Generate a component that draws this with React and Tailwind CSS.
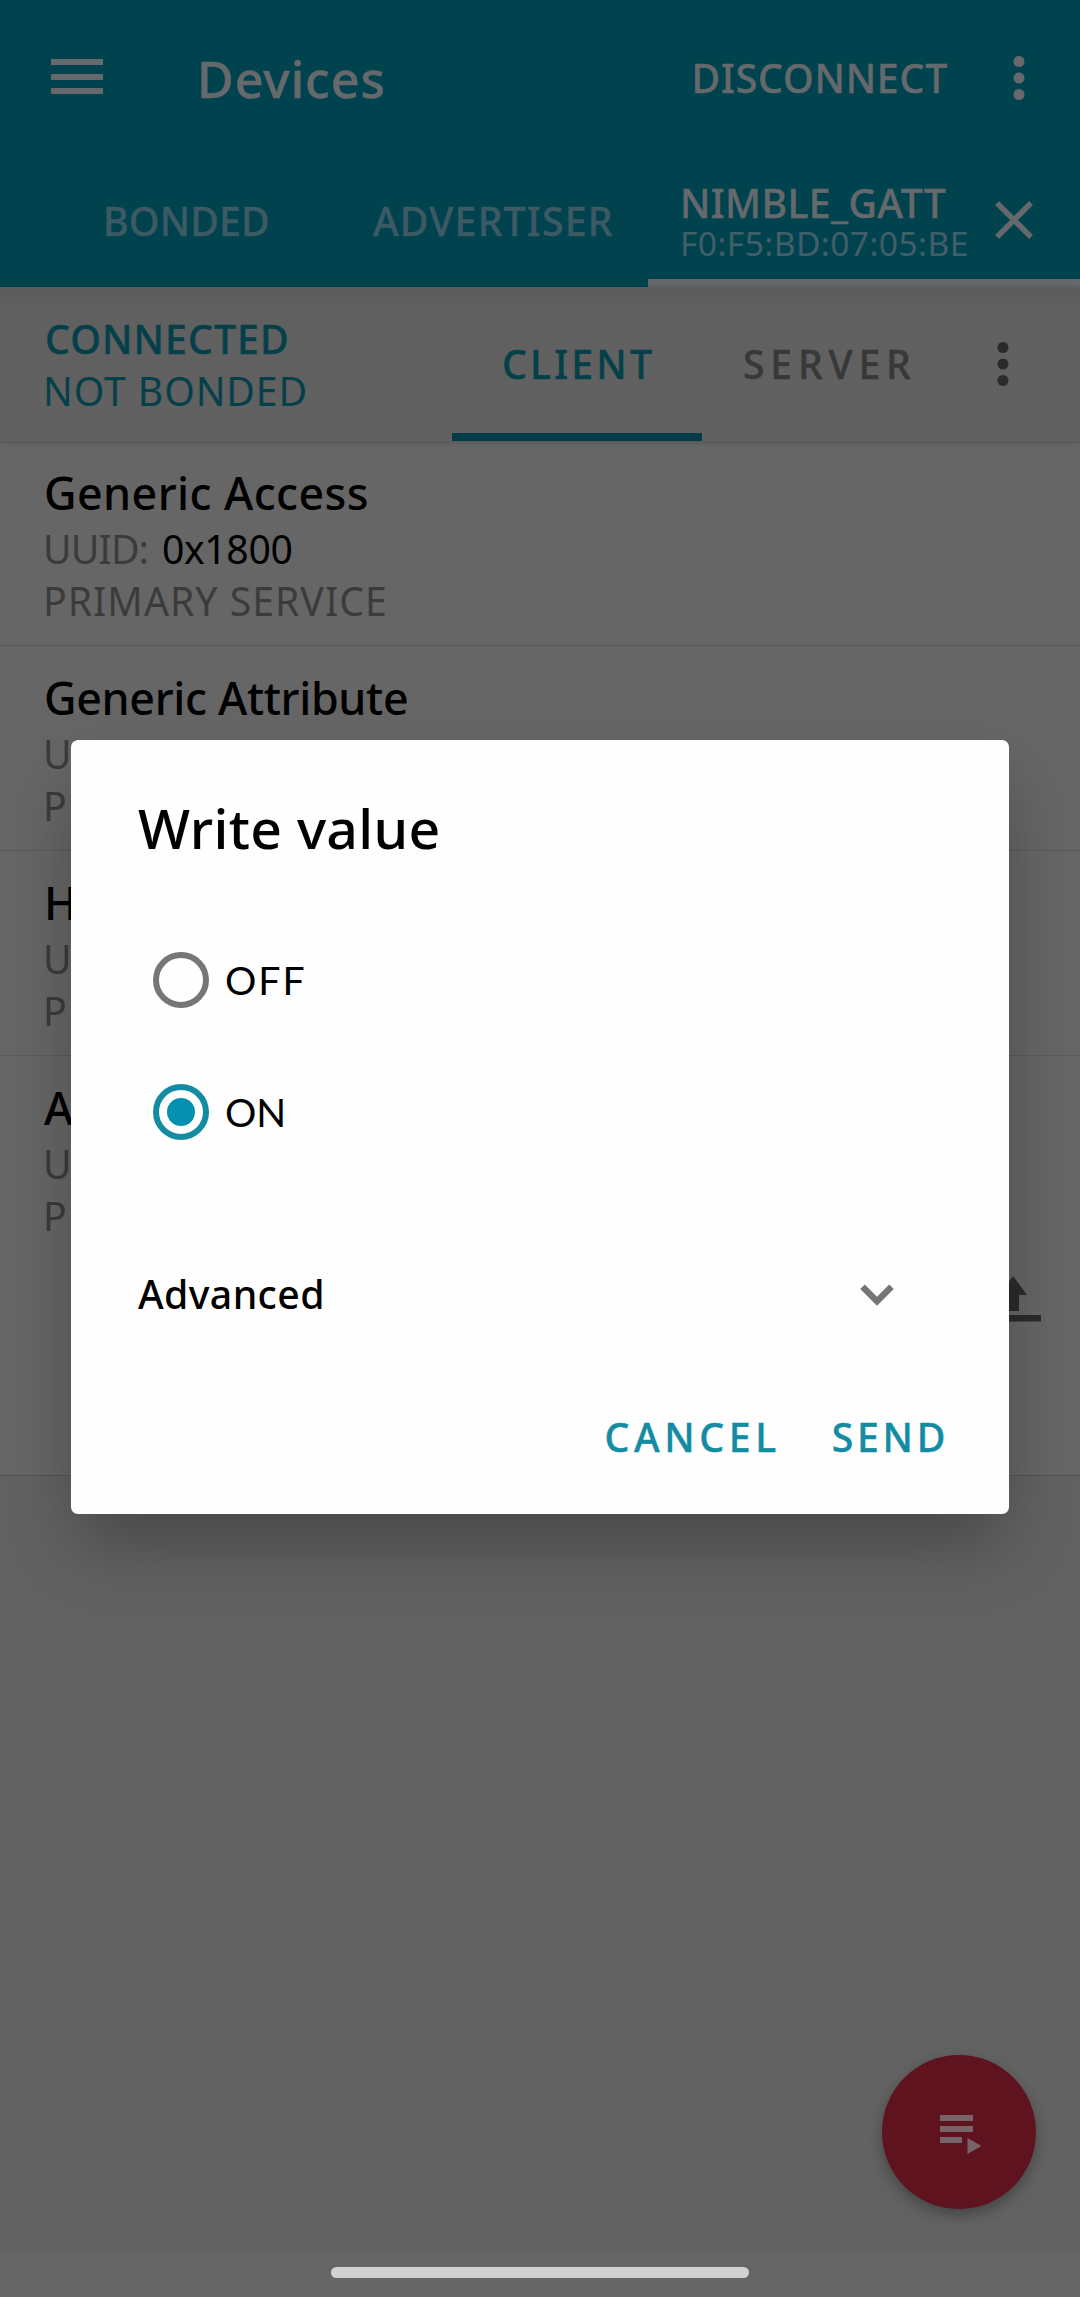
import React from "react";

const services = [
  { name: "Generic Access", uuid: "0x1800", spacing: "tracking-[0.4px]" },
  { name: "Generic Attribute", uuid: "0x1801", spacing: "tracking-[-0.35px]" },
  { name: "Heart Rate", uuid: "0x180D", spacing: "tracking-[0.3px]" },
  { name: "Automation IO", uuid: "0x1815", spacing: "tracking-[0.3px]" },
];

function Dots({ className }) {
  return (
    <svg width="12" height="46" viewBox="0 0 12 46" fill="currentColor" className={className}>
      <circle cx="6" cy="6.5" r="5.5" />
      <circle cx="6" cy="23" r="5.5" />
      <circle cx="6" cy="39.5" r="5.5" />
    </svg>
  );
}

function Toolbar() {
  return (
    <div className="flex h-[156px] items-center font-medium text-[#65696c] [-webkit-text-stroke:0.4px]">
      <div className="ml-[51px] mb-[3px] flex w-[52px] flex-col gap-[8.5px]">
        <div className="h-[6px] bg-current" />
        <div className="h-[6px] bg-current" />
        <div className="h-[6px] bg-current" />
      </div>
      <div className="ml-[94px] pt-px text-[50.4px] tracking-[0.8px]">Devices</div>
      <div className="ml-auto mr-[65px] pt-px text-[39.2px] tracking-[0.8px]">DISCONNECT</div>
      <Dots className="mr-[55px]" />
    </div>
  );
}

function DeviceTabs() {
  return (
    <div className="flex h-[131px] text-[39.2px] font-medium text-[#3b5a63] [-webkit-text-stroke:0.4px]">
      <div className="flex w-[373px] items-center pl-[103px] tracking-[0.15px]">BONDED</div>
      <div className="flex w-[275px] items-center tracking-[1.2px]">ADVERTISER</div>
      <div className="flex w-[432px] items-center border-b-8 border-[#65696c] pl-[32px] pt-[9px] text-[#65696c]">
        <div className="w-[314px] whitespace-nowrap">
          <div className="leading-[41px] tracking-[0.4px]">NIMBLE_GATT</div>
          <div className="text-[33.6px] font-normal leading-[40px] tracking-[0.4px] text-[#415f68] [-webkit-text-stroke:0]">F0:F5:BD:07:05:BE</div>
        </div>
        <svg width="40" height="40" viewBox="0 0 40 40" fill="none" stroke="currentColor" strokeWidth="5.5" className="mb-[5px]">
          <path d="M3 3 37 37M37 3 3 37" />
        </svg>
      </div>
    </div>
  );
}

function ConnectionBar() {
  return (
    <div className="relative flex h-[154px] bg-linear-to-b from-[#5b5d5c] from-0% via-[#5f605f] via-15% to-[#616161] text-[39.2px] font-medium shadow-[0_1px_5px_rgba(0,0,0,0.22)] [-webkit-text-stroke:0.4px]">
      <div className="flex w-[452px] flex-col justify-center pl-[45px] pt-px leading-[52px] text-[#05404a]">
        <div className="tracking-[1.1px]">CONNECTED</div>
        <div className="ml-[-2px] font-normal tracking-[0.9px] [-webkit-text-stroke:0]">NOT BONDED</div>
      </div>
      <div className="flex w-[250px] items-center border-b-8 border-[#023c47] pl-[50px] pt-[9px] tracking-[3.2px] text-[#05404a]">CLIENT</div>
      <div className="flex w-[295px] items-center pl-[41px] pt-px tracking-[5.8px] text-[#373938]">SERVER</div>
      <Dots className="my-auto text-[#2b2b2b]" />
    </div>
  );
}

function Service({ name, uuid, spacing }) {
  return (
    <div className="h-[205px] border-b border-[#5a5a5a] pl-[43px] pt-[22px] text-[39.2px] leading-[52px] text-[#3b3b3b]">
      <div className={"ml-px text-[44.8px] font-medium leading-[60px] text-black " + spacing}>{name}</div>
      <div className="flex">
        <div className="w-[119px] tracking-[-0.9px]">UUID:</div>
        <div className="tracking-[-0.4px] text-black">{uuid}</div>
      </div>
      <div className="tracking-[1px]">PRIMARY SERVICE</div>
    </div>
  );
}

function Dialog() {
  return (
    <div className="absolute left-[71px] top-[740px] flex h-[774px] w-[938px] flex-col rounded-[7px] bg-[#fefefe] text-[39.2px] text-black shadow-[0_36px_72px_-6px_rgba(0,0,0,0.28)]">
      <div className="ml-[67px] mt-[44px] text-[55.3px] font-medium leading-[88px] tracking-[0.3px]">Write value</div>
      <div className="mt-[42px] flex h-[132px] items-center">
        <div className="ml-[82px] size-[56px] rounded-full border-[6px] border-[#767676]" />
        <div className="ml-[16px] pt-px font-['Lato',sans-serif] tracking-[2px]">OFF</div>
      </div>
      <div className="flex h-[132px] items-center">
        <div className="ml-[82px] flex size-[56px] items-center justify-center rounded-full border-[6px] border-[#138ca3]">
          <div className="size-[28px] rounded-full bg-[#0590b0]" />
        </div>
        <div className="ml-[16px] pt-px font-['Lato',sans-serif] tracking-[0px]">ON</div>
      </div>
      <div className="mt-[86px] flex h-[60px] items-center font-medium">
        <div className="ml-[67px] pt-px tracking-[0.4px]">Advanced</div>
        <svg width="34" height="22" viewBox="0 0 34 22" fill="none" stroke="#757575" strokeWidth="6.4" className="ml-auto mr-[115px] mt-px">
          <path d="M2.5 2.8 17 17.3 31.5 2.8" />
        </svg>
      </div>
      <div className="mt-[83px] flex h-[60px] items-center justify-end pt-px font-medium text-[#138ca3] [-webkit-text-stroke:0.4px]">
        <div className="mr-[51px] tracking-[4.6px]">CANCEL</div>
        <div className="mr-[60px] tracking-[3.7px]">SEND</div>
      </div>
    </div>
  );
}

export default function App() {
  return (
    <div className="relative flex h-[2297px] w-[1080px] flex-col overflow-hidden bg-[#626262] font-['Noto_Sans',sans-serif]">
      <header className="bg-[#00434f]">
        <Toolbar />
        <DeviceTabs />
      </header>
      <ConnectionBar />
      <div className="h-[1035px] border-b border-[#555555] bg-[#666666]">
        {services.slice(0, 3).map((s) => (
          <Service key={s.name} {...s} />
        ))}
        <div className="h-[204px] overflow-hidden">
          <Service {...services[3]} />
        </div>
        <div className="flex justify-end pr-[39px]">
          <svg width="56" height="46" viewBox="0 0 56 46" fill="#2b2b2b" className="mt-[16px]">
            <path d="M28 0 42 19H34V35H22V19H14ZM0 39H56V45.5H0Z" />
          </svg>
        </div>
      </div>
      <div className="mt-auto flex h-[44px] items-start justify-center bg-[#666666] pt-[14px]">
        <div className="h-[11px] w-[418px] rounded-full bg-[#d2d2d2]" />
      </div>
      <button className="absolute left-[882px] top-[2055px] flex size-[154px] items-center justify-center rounded-full bg-[#5e131e] text-[#776468] shadow-[0_6px_14px_rgba(0,0,0,0.3)]">
        <svg width="42" height="40" viewBox="0 0 42 40" fill="currentColor" className="ml-[3px] mt-[5px]">
          <path d="M0 0H33V6H0ZM0 11H33V17H0ZM0 22H22V28H0ZM27.5 23 41.5 31 27.5 39Z" />
        </svg>
      </button>
      <Dialog />
    </div>
  );
}
